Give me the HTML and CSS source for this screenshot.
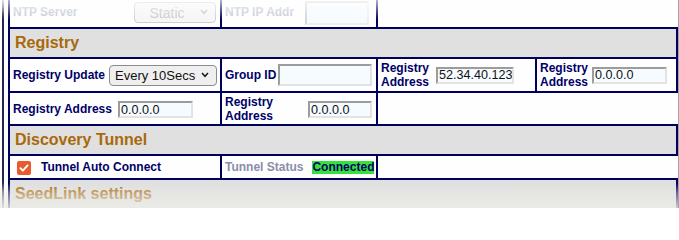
FILE: index.html
```html
<!DOCTYPE html>
<html>
<head>
<meta charset="utf-8">
<link rel="stylesheet" href="styles.css">
</head>
<body>
<div class="page">
  <div class="edge"></div>
  <div class="frame">
    <div class="row row-top">
      <div class="cell">
        <span class="lbl lbl-faded">NTP Server</span>
        <span class="sel-wrap sel-ntp">
          <select class="sel sel-faded"><option>Static</option></select>
          <svg class="chev" width="8" height="6" viewBox="0 0 8 6"><path d="M1 1 L4 4.3 L7 1" fill="none" stroke="#c4c4c4" stroke-width="1.5"/></svg>
        </span>
      </div>
      <div class="cell">
        <span class="lbl lbl-faded">NTP IP Addr</span>
        <input class="inp inp-ntp" value="">
      </div>
    </div>

    <div class="hdr">Registry</div>

    <div class="row row-1">
      <div class="cell">
        <span class="lbl">Registry Update</span>
        <span class="sel-wrap sel-upd">
          <select class="sel"><option>Every 10Secs</option></select>
          <svg class="chev" width="8" height="6" viewBox="0 0 8 6"><path d="M1 1 L4 4.3 L7 1" fill="none" stroke="#1a1a1a" stroke-width="1.5"/></svg>
        </span>
      </div>
      <div class="cell">
        <span class="lbl">Group ID</span>
        <input class="inp inp-group" value="">
      </div>
      <div class="cell">
        <span class="lbl lbl-2">Registry<br>Address</span>
        <input class="inp inp-reg1" value="52.34.40.123">
      </div>
      <div class="cell">
        <span class="lbl lbl-2 lbl-c4">Registry<br>Address</span>
        <input class="inp inp-reg2" value="0.0.0.0">
      </div>
    </div>

    <div class="row row-2">
      <div class="cell">
        <span class="lbl">Registry Address</span>
        <input class="inp inp-reg3" value="0.0.0.0">
      </div>
      <div class="cell">
        <span class="lbl lbl-2 lbl-wide">Registry<br>Address</span>
        <input class="inp inp-reg4" value="0.0.0.0">
      </div>
    </div>

    <div class="hdr">Discovery Tunnel</div>

    <div class="row row-3">
      <div class="cell">
        <span class="chk">
          <svg width="14" height="14" viewBox="0 0 14 14"><path d="M3.4 7.2 L5.9 9.7 L10.6 4.4" fill="none" stroke="#fff" stroke-width="1.9" stroke-linecap="round" stroke-linejoin="round"/></svg>
        </span>
        <span class="lbl lbl-chk">Tunnel Auto Connect</span>
      </div>
      <div class="cell">
        <span class="lbl lbl-muted">Tunnel Status</span>
        <span class="status">Connected</span>
      </div>
    </div>

    <div class="hdr">SeedLink settings</div>
  </div>
  <div class="fade-top"></div>
  <div class="fade-bottom"></div>
</div>
</body>
</html>
```

FILE: styles.css
```css
html, body {
  margin: 0;
  padding: 0;
  background: #ffffff;
}

.page {
  position: relative;
  display: flex;
  align-items: flex-start;
  width: 679px;
  height: 208px;
  box-sizing: border-box;
  border-right: 1px solid #a4a4a4;
  overflow: hidden;
  background: #fdfefd;
  font-family: "Liberation Sans", Arial, sans-serif;
}

.edge {
  flex: none;
  width: 2px;
  height: 208px;
  margin-left: 2px;
  background: linear-gradient(#9a9ab0 0px, #24244c 14px, #24244c 180px, #8a8c9c 208px);
}

.frame {
  flex: none;
  width: 670px;
  margin-left: 4px;
  margin-top: -4px;
}

.row {
  display: grid;
  grid-template-columns: 214px 156px 159px 141px;
}

.row-top { height: 33px; }
.row-1 { height: 34px; }
.row-2 { height: 33px; }
.row-3 { height: 24px; }

.cell {
  display: flex;
  align-items: center;
  box-sizing: border-box;
  border-right: 2px solid #00005e;
  border-bottom: 2px solid #00005e;
  padding-left: 3px;
  background: #fdfefd;
}

.cell:first-child {
  border-left: 2px solid #00005e;
}

.hdr {
  box-sizing: border-box;
  height: 32px;
  margin-top: -2px;
  border: 2px solid #00005e;
  background: #dfe0df;
  padding-left: 5px;
  font-size: 16px;
  font-weight: bold;
  line-height: 28px;
  color: #a8690b;
}

.lbl {
  font-size: 12px;
  font-weight: bold;
  line-height: 14px;
  color: #00006a;
  white-space: nowrap;
}

.lbl-faded {
  color: #c6cad6;
}

.lbl-2 {
  width: 55px;
  flex: none;
}

.lbl-c4 {
  width: 52px;
}

.lbl-wide {
  width: 84px;
}

.lbl-muted {
  color: #8c8cac;
  margin-right: 9px;
}

.lbl-chk {
  margin-left: 10px;
}

.sel-wrap {
  position: relative;
  display: inline-flex;
}

.sel {
  appearance: none;
  -webkit-appearance: none;
  margin: 0;
  height: 21px;
  box-sizing: border-box;
  border: 1px solid #8c8c8c;
  border-radius: 4px;
  background: #efefef;
  padding: 0 0 0 5px;
  font-family: "Liberation Sans", Arial, sans-serif;
  font-size: 13px;
  color: #111;
}

.sel-upd { margin-left: 4px; }
.sel-upd .sel { width: 108px; }

.sel-ntp { margin-left: 57px; margin-top: 2px; }
.sel-ntp .sel { width: 82px; }

.sel-faded {
  border-color: #cfcfcf;
  color: #c8c8c8;
  background: #f6f6f6;
  font-size: 14px;
  padding-left: 14px;
}

.chev {
  position: absolute;
  right: 8px;
  top: 7px;
}

.inp {
  margin: 0;
  box-sizing: border-box;
  height: 17px;
  border-style: solid;
  border-width: 2px;
  border-color: #9c9c9c #e3e3e3 #e3e3e3 #9c9c9c;
  background: #f6fbff;
  padding: 0 0 0 1px;
  font-family: "Liberation Sans", Arial, sans-serif;
  font-size: 12.6px;
  color: #111;
  outline: none;
}

.inp-ntp {
  width: 64px;
  height: 24px;
  margin-left: 11px;
  margin-top: 2px;
  border-color: #d6d6d6 #eeeeee #eeeeee #d6d6d6;
}

.inp-group {
  width: 94px;
  height: 22px;
  margin-left: 2px;
}

.inp-reg1 {
  width: 78px;
}

.inp-reg2 {
  width: 75px;
}

.inp-reg3 {
  width: 75px;
  margin-left: 6px;
  margin-top: 2px;
}

.inp-reg4 {
  width: 64px;
  margin-left: -1px;
  margin-top: 2px;
}

.chk {
  display: inline-flex;
  flex: none;
  width: 14px;
  height: 14px;
  margin-left: 4px;
  margin-top: 2px;
  border-radius: 2px;
  background: #e95a2c;
}

.status {
  font-size: 12px;
  font-weight: bold;
  line-height: 13px;
  color: #00006a;
  background: #36e23a;
  margin-top: 1px;
}

.fade-top {
  position: absolute;
  left: 0;
  top: 0;
  width: 100%;
  height: 20px;
  background: linear-gradient(rgba(255, 255, 255, 0.7), rgba(255, 255, 255, 0));
}

.fade-bottom {
  position: absolute;
  left: 0;
  top: 183px;
  width: 100%;
  height: 25px;
  background: linear-gradient(rgba(236, 236, 232, 0), rgba(236, 236, 232, 0.45) 40%, rgba(236, 236, 232, 0.85));
}
```
